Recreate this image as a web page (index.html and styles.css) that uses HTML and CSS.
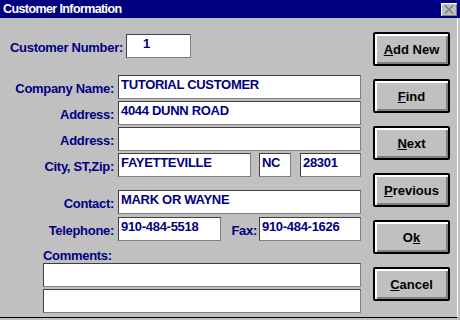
FILE: index.html
```html
<!DOCTYPE html>
<html lang="en">
<head>
    <meta charset="UTF-8">
    <meta name="viewport" content="width=device-width, initial-scale=1.0">
    <title>Customer Information</title>
    <link rel="stylesheet" href="styles.css">
</head>
<body>
    <div class="window">
        <div class="titlebar">
            <span class="title">Customer Information</span>
            <span class="close">
                <svg width="10" height="9" viewBox="0 0 10 9">
                    <path d="M1 0.5 L9 8.5 M9 0.5 L1 8.5" stroke="#808080" stroke-width="1.6" fill="none"/>
                </svg>
            </span>
        </div>

        <div class="content">
            <form class="form">
                <div class="row row-customer">
                    <label class="label label-customer" for="custNo">Customer Number:</label>
                    <input class="field w-cust" id="custNo" value="1">
                </div>

                <div class="row row-company">
                    <label class="label" for="company">Company Name:</label>
                    <input class="field w-full" id="company" value="TUTORIAL CUSTOMER">
                </div>
                <div class="row">
                    <label class="label" for="addr1">Address:</label>
                    <input class="field w-full" id="addr1" value="4044 DUNN ROAD">
                </div>
                <div class="row">
                    <label class="label" for="addr2">Address:</label>
                    <input class="field w-full" id="addr2" value="">
                </div>
                <div class="row">
                    <label class="label" for="city">City, ST,Zip:</label>
                    <input class="field w-city" id="city" value="FAYETTEVILLE">
                    <input class="field w-st" id="state" value="NC">
                    <input class="field w-zip" id="zip" value="28301">
                </div>

                <div class="row row-contact">
                    <label class="label" for="contact">Contact:</label>
                    <input class="field w-full" id="contact" value="MARK OR WAYNE">
                </div>
                <div class="row row-phone">
                    <label class="label" for="phone">Telephone:</label>
                    <input class="field w-tel" id="phone" value="910-484-5518">
                    <label class="label label-fax" for="fax">Fax:</label>
                    <input class="field w-fax" id="fax" value="910-484-1626">
                </div>

                <div class="comments">
                    <label class="label label-comments" for="comment1">Comments:</label>
                    <input class="field w-comment" id="comment1" value="">
                    <input class="field w-comment" id="comment2" value="">
                </div>
            </form>

            <div class="buttons">
                <button type="button" class="btn"><u>A</u>dd New</button>
                <button type="button" class="btn"><u>F</u>ind</button>
                <button type="button" class="btn"><u>N</u>ext</button>
                <button type="button" class="btn"><u>P</u>revious</button>
                <button type="button" class="btn">O<u>k</u></button>
                <button type="button" class="btn"><u>C</u>ancel</button>
            </div>
        </div>
    </div>
</body>
</html>
```

FILE: styles.css
```css
body {
    margin: 0;
    font-family: "Liberation Sans", Arial, sans-serif;
    background-color: #c0c0c0;
}

.window {
    width: 460px;
    height: 320px;
    box-sizing: border-box;
    padding-bottom: 2px;
    display: flex;
    flex-direction: column;
    background-color: #c0c0c0;
}

.titlebar {
    height: 18px;
    flex-shrink: 0;
    background-color: #000080;
    color: #fff;
    display: flex;
    align-items: center;
    justify-content: space-between;
    padding: 0 3px 0 3px;
}

.title {
    font-size: 12.5px;
    font-weight: bold;
    letter-spacing: -0.6px;
}

.close {
    width: 16px;
    height: 13px;
    background-color: #c0c0c0;
    box-shadow: inset 1px 1px #fff, inset -1px -1px #808080;
    display: flex;
    align-items: center;
    justify-content: center;
}

.content {
    flex: 1;
    display: flex;
    gap: 12px;
    padding: 14px 0 0 10px;
    border-bottom: 1px solid #000;
    border-right: 1px solid #fff;
    margin-right: 2px;
}

.form {
    width: 351px;
    margin: 2px 0 0 0;
}

.row {
    display: flex;
    align-items: center;
    height: 24px;
    margin-top: 2px;
}

.row-customer {
    margin-top: 0;
}

.row-company {
    margin-top: 17px;
}

.row-contact {
    margin-top: 13px;
}

.row-phone {
    margin-top: 3px;
}

.label {
    width: 104px;
    margin-right: 4px;
    padding-top: 3px;
    text-align: right;
    color: #000080;
    font-size: 13px;
    font-weight: bold;
    letter-spacing: -0.3px;
    white-space: nowrap;
}

.label-customer {
    width: auto;
    margin-right: 3px;
}

.label-fax {
    width: auto;
    flex: 1;
    margin-right: 2px;
}

.field {
    box-sizing: border-box;
    height: 24px;
    margin: 0;
    padding: 1px 2px 6px 2px;
    border: 1px solid;
    border-color: #404040 #808080 #808080 #404040;
    border-radius: 0;
    background-color: #fff;
    color: #000080;
    font-family: "Liberation Sans", Arial, sans-serif;
    font-size: 13px;
    font-weight: bold;
    letter-spacing: -0.3px;
    outline: none;
}

.w-cust {
    width: 65px;
    padding-left: 16px;
}

.w-full {
    width: 243px;
}

.w-city {
    width: 133px;
    margin-right: 8px;
}

.w-st {
    width: 32px;
    margin-right: 9px;
}

.w-zip {
    width: 61px;
}

.w-tel {
    width: 103px;
}

.w-fax {
    width: 102px;
}

.comments {
    display: flex;
    flex-direction: column;
    margin: 7px 0 0 33px;
}

.label-comments {
    width: auto;
    padding-top: 0;
    line-height: 15px;
    text-align: left;
    margin-bottom: 0;
}

.w-comment {
    width: 318px;
    margin-bottom: 2px;
}

.buttons {
    display: flex;
    flex-direction: column;
    gap: 13px;
}

.btn {
    width: 77px;
    height: 34px;
    box-sizing: border-box;
    padding: 0;
    border: 2px solid #000;
    border-radius: 2px;
    background-color: #c0c0c0;
    box-shadow: inset 2px 2px #fff, inset -2px -2px #808080;
    color: #000;
    font-family: "Liberation Sans", Arial, sans-serif;
    font-size: 13px;
    font-weight: bold;
    cursor: pointer;
}

.btn:active {
    box-shadow: inset 2px 2px #808080;
}
```
